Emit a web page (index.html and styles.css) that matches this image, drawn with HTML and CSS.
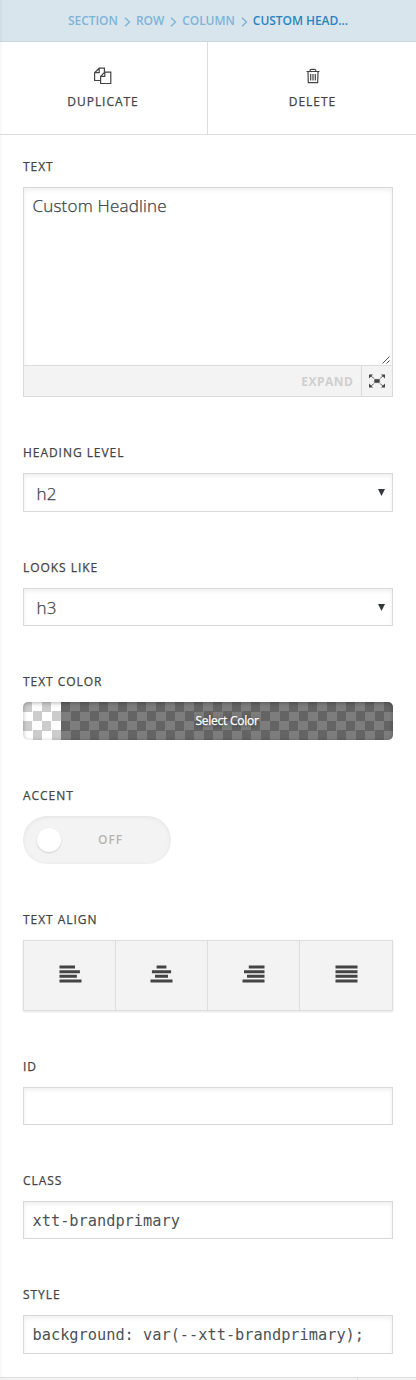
FILE: index.html
```html
<!DOCTYPE html>
<html lang="en">
<head>
<meta charset="utf-8">
<title>Custom Headline</title>
<link rel="stylesheet" href="styles.css">
</head>
<body>
<main class="panel">
  <nav class="crumbs">
    <span class="crumb">SECTION</span>
    <svg class="chevron" viewBox="0 0 7 10"><path d="M1 .8 5.5 5 1 9.2"/></svg>
    <span class="crumb">ROW</span>
    <svg class="chevron" viewBox="0 0 7 10"><path d="M1 .8 5.5 5 1 9.2"/></svg>
    <span class="crumb">COLUMN</span>
    <svg class="chevron" viewBox="0 0 7 10"><path d="M1 .8 5.5 5 1 9.2"/></svg>
    <span class="crumb current">CUSTOM HEAD...</span>
  </nav>
  <div class="actions">
    <div class="action">
      <svg class="action-icon" viewBox="0 0 18 18"><path d="M6.6 13.5H.6V5.7L5.2 1.2h5.2v4M.6 5.7h4.6V1.2M6.6 9.4l4.2-4.2h6v11.3H6.6zM6.6 9.4h4.2V5.2"/></svg>
      <span>DUPLICATE</span>
    </div>
    <div class="action">
      <svg class="action-icon" viewBox="0 0 18 18"><path d="M2.5 4.5h13M6 4.3c0-1.5.5-2 1.5-2h3c1 0 1.5.5 1.5 2M4 4.7l.3 11h9.4l.3-11M6.7 7v6.4M9 7v6.4M11.3 7v6.4"/></svg>
      <span>DELETE</span>
    </div>
  </div>
  <div class="fields">
    <section class="field">
      <div class="label">TEXT</div>
      <div class="box editor">
        <span>Custom Headline</span>
        <svg class="grip" viewBox="0 0 8 8"><path d="M.5 7.5l7-7M4.5 7.5l3-3"/></svg>
      </div>
      <div class="toolbar">
        <span class="expand">EXPAND</span>
        <span class="expand-button">
          <svg class="expand-icon" viewBox="0 0 16 14"><path class="arms" d="M2 2l12 10M14 2 2 12"/><path d="M0 .5h4L0 4.5zM16 .5h-4l4 4zM0 13.5h4l-4-4zM16 13.5h-4l4-4z"/><path class="core" d="M4.8 4.7h6.4v4.6H4.8z"/></svg>
        </span>
      </div>
    </section>
    <section class="field">
      <div class="label">HEADING LEVEL</div>
      <div class="box select tall"><span>h2</span><svg class="caret" viewBox="0 0 7 7"><path d="M0 0h7L3.5 7z"/></svg></div>
    </section>
    <section class="field">
      <div class="label">LOOKS LIKE</div>
      <div class="box select"><span>h3</span><svg class="caret" viewBox="0 0 7 7"><path d="M0 0h7L3.5 7z"/></svg></div>
    </section>
    <section class="field">
      <div class="label">TEXT COLOR</div>
      <div class="color"><div class="color-button">Select Color</div></div>
    </section>
    <section class="field">
      <div class="label">ACCENT</div>
      <div class="toggle"><span class="knob"></span><span class="state">OFF</span></div>
    </section>
    <section class="field">
      <div class="label">TEXT ALIGN</div>
      <div class="align">
        <div class="option"><svg class="align-icon" viewBox="0 0 23 18"><path d="M.5 2h15.5M.5 6.7h20.4M.5 11.3h17.4M.5 16h22"/></svg></div>
        <div class="option"><svg class="align-icon" viewBox="0 0 23 18"><path d="M6.6 2h9.8M1.9 6.7h19.2M5 11.3h13M.5 16h22"/></svg></div>
        <div class="option"><svg class="align-icon" viewBox="0 0 23 18"><path d="M6.8 2h15.7M2 6.7h20.5M5 11.3h17.5M.5 16h22"/></svg></div>
        <div class="option"><svg class="align-icon" viewBox="0 0 23 18"><path d="M.5 2h22M.5 6.7h22M.5 11.3h22M.5 16h22"/></svg></div>
      </div>
    </section>
    <section class="field">
      <div class="label">ID</div>
      <div class="box input"></div>
    </section>
    <section class="field">
      <div class="label">CLASS</div>
      <div class="box input">xtt-brandprimary</div>
    </section>
    <section class="field">
      <div class="label">STYLE</div>
      <div class="box input tall">background: var(--xtt-brandprimary);</div>
    </section>
  </div>
  <footer class="footer"><span class="footer-main"></span></footer>
</main>
</body>
</html>
```
FILE: styles.css
```css
* { box-sizing: border-box; }
body {
  margin: 0;
  background: #fff;
  color: #444;
  font-family: "Open Sans", sans-serif;
}
svg { display: block; fill: none; stroke: currentColor; }
.panel {
  width: 416px;
  height: 1380px;
  display: flex;
  flex-direction: column;
  overflow: hidden;
  background: linear-gradient(90deg, #f6f6f6, #fff 3px);
}
.crumbs {
  height: 42px;
  display: flex;
  align-items: center;
  justify-content: center;
  background: linear-gradient(90deg, #d0dce4, #d9e5ed 3px);
  border-bottom: 1px solid #cbd7df;
  color: #7eb3d8;
  font-size: 12px;
  font-weight: 600;
  letter-spacing: -.05px;
}
.crumb { line-height: 16px; }
.current { color: #2a83c0; }
.chevron { width: 7px; height: 10px; margin: 2px 5px 0 6px; stroke-width: 1.4; }
.actions {
  height: 93px;
  display: grid;
  grid-template-columns: 1fr 1fr;
  border-bottom: 1px solid #ddd;
  font-size: 12px;
  letter-spacing: .95px;
  -webkit-text-stroke: .25px currentColor;
}
.action {
  display: flex;
  flex-direction: column;
  align-items: center;
  padding-top: 25px;
  gap: 8px;
  line-height: 17px;
}
.action:first-child { padding-right: 1px; border-right: 1px solid #ddd; }
.action:last-child { padding-left: 1px; }
.action-icon { width: 18px; height: 18px; stroke-width: 1.2; }
.fields {
  flex: 1;
  padding: 12px 23px 0;
  display: flex;
  flex-direction: column;
  gap: 36px;
}
.label {
  height: 40px;
  line-height: 40px;
  font-size: 12px;
  letter-spacing: .95px;
  -webkit-text-stroke: .25px currentColor;
}
.box {
  border: 1px solid #d9d9d9;
  background: #fff;
  box-shadow: inset 0 2px 4px rgba(0, 0, 0, .07);
  color: #4b5257;
  font-size: 17px;
}
.editor {
  height: 179px;
  padding: 6px 9px 6px 8.5px;
  display: flex;
  justify-content: space-between;
  line-height: 24px;
  border-bottom-color: #ddd;
}
.grip { width: 8px; height: 8px; align-self: flex-end; margin: 0 -7px -5px 0; stroke-width: .9; }
.toolbar {
  height: 31px;
  display: flex;
  justify-content: flex-end;
  align-items: stretch;
  border: 1px solid #d9d9d9;
  border-top: 0;
  background: #f3f3f3;
}
.expand {
  padding-right: 7.5px;
  color: #cfcfcf;
  font-size: 12px;
  font-weight: 700;
  letter-spacing: .5px;
  line-height: 31px;
}
.expand-button {
  width: 31px;
  padding-right: 1px;
  display: grid;
  place-items: center;
  border-left: 1px solid #d9d9d9;
}
.expand-icon { width: 16px; height: 14px; fill: #444; stroke: none; }
.arms { stroke: #666; stroke-width: 1; }
.core { stroke: #f3f3f3; stroke-width: 1; }
.editor, .select {
  font-weight: 300;
  color: #3a4146;
  letter-spacing: .2px;
  -webkit-text-stroke: .25px currentColor;
}
.select {
  height: 38px;
  padding: 1px 7px 0 12.5px;
  display: flex;
  align-items: center;
  justify-content: space-between;
}
.caret { width: 7px; height: 7px; margin-top: -1px; fill: #33383b; stroke: none; }
.color {
  height: 38px;
  padding-left: 38px;
  overflow: hidden;
  position: relative;
  border-radius: 5px;
  background: repeating-conic-gradient(#fff 0 25%, #ccc 0 50%) 0 0 / 19px 19px;
}
.color::after {
  content: "";
  position: absolute;
  inset: 0;
  border-radius: 5px;
  box-shadow: inset 0 1px 4px rgba(0, 0, 0, .3);
}
.color-button {
  height: 38px;
  background: rgba(0, 0, 0, .51);
  color: #fff;
  font-size: 12px;
  letter-spacing: -.25px;
  line-height: 37px;
  text-align: center;
  text-shadow: 0 1px 4px rgba(0, 0, 0, .6);
  -webkit-text-stroke: .25px currentColor;
}
.toggle {
  width: 148px;
  height: 48px;
  padding-left: 14px;
  display: flex;
  align-items: center;
  border-radius: 24px;
  background: #f3f3f3;
  box-shadow: inset 0 1px 4px rgba(0, 0, 0, .07);
}
.knob { width: 24px; height: 24px; border-radius: 50%; background: #fff; box-shadow: 0 1px 2px rgba(0, 0, 0, .15); }
.state { margin: -2px 0 0 37px; color: #b5b5b5; font-size: 12px; font-weight: 600; letter-spacing: 1px; }
.align {
  height: 71px;
  display: grid;
  grid-template-columns: 91px 92px 92px 93px;
  border: 1px solid #ddd;
  background: #f3f3f3;
  box-shadow: 0 1px 2px rgba(0, 0, 0, .1);
}
.option { display: grid; place-items: center; border-left: 1px solid #ddd; }
.option:first-child { border-left: 0; padding-left: 1px; }
.align-icon { width: 23px; height: 18px; margin-top: -3px; stroke-width: 3; }
.input {
  height: 38px;
  padding-left: 8.5px;
  font-family: "DejaVu Sans Mono", monospace;
  font-size: 15.3px;
  line-height: 38px;
  white-space: nowrap;
}
.tall { height: 39px; }
.input.tall { line-height: 39px; }
.footer { height: 3px; border-top: 1px solid #ddd; background: #f3f3f3; display: flex; }
.footer-main { width: 358px; border-right: 1px solid #ddd; }
```
